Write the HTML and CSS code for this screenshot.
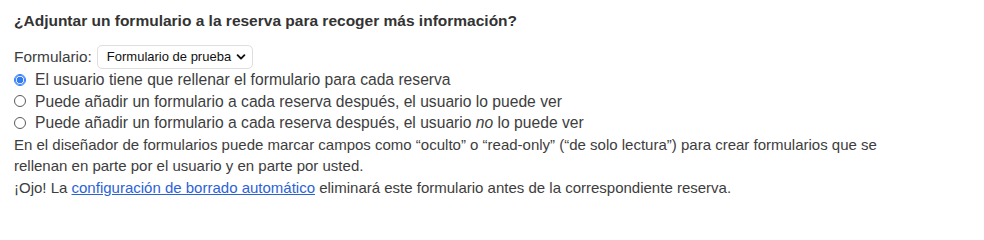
FILE: index.html
```html
<!DOCTYPE html>
<html lang="es">
<head>
<meta charset="utf-8">
<title>Formulario</title>
<link rel="stylesheet" href="styles.css">
</head>
<body>
<div class="panel">
  <h4 class="title">¿Adjuntar un formulario a la reserva para recoger más información?</h4>
  <div class="field">
    <span class="field-label">Formulario:</span>
    <span class="select">
      <span class="select-text">Formulario de prueba</span>
      <svg class="chevron" width="10" height="8" viewBox="0 0 10 8"><path d="M1.6 2.2 L5 5.6 L8.4 2.2" fill="none" stroke="#111" stroke-width="1.9" stroke-linecap="round" stroke-linejoin="round"/></svg>
    </span>
  </div>
  <div class="options">
    <label class="option"><span class="radio checked"></span><span class="option-text">El usuario tiene que rellenar el formulario para cada reserva</span></label>
    <label class="option"><span class="radio"></span><span class="option-text">Puede añadir un formulario a cada reserva después, el usuario lo puede ver</span></label>
    <label class="option"><span class="radio"></span><span class="option-text">Puede añadir un formulario a cada reserva después, el usuario <em>no</em> lo puede ver</span></label>
  </div>
  <p class="note">En el diseñador de formularios puede marcar campos como “oculto” o “read-only” (“de solo lectura”) para crear formularios que se rellenan en parte por el usuario y en parte por usted.</p>
  <p class="note">¡Ojo! La <a class="link" href="#">configuración de borrado automático</a> eliminará este formulario antes de la correspondiente reserva.</p>
</div>
</body>
</html>
```
FILE: styles.css
```css
html, body {
  margin: 0;
  padding: 0;
  background: #ffffff;
}
body {
  font-family: "Liberation Sans", Arial, sans-serif;
  font-size: 15px;
  line-height: 21.5px;
  color: #3d3d3d;
}
.panel {
  padding: 10px 70px 0 14px;
}
.title {
  margin: 0 0 13px 0;
  font-size: 15.5px;
  font-weight: bold;
  color: #333333;
  line-height: 22px;
}
.field {
  display: flex;
  align-items: center;
  gap: 5px;
  height: 24px;
}
.field-label {
  font-size: 15.4px;
  color: #3d3d3d;
}
.select {
  display: inline-flex;
  align-items: center;
  height: 24px;
  box-sizing: border-box;
  padding: 0 6px 0 9px;
  border: 1px solid #dedede;
  border-radius: 5px;
  background: #fff;
  gap: 5px;
  font-size: 13px;
  color: #111;
}
.chevron {
  display: block;
}
.options {
  display: flex;
  flex-direction: column;
}
.option {
  display: flex;
  align-items: center;
  gap: 9px;
  height: 21.5px;
}
.option-text {
  font-size: 15.65px;
}
.radio {
  width: 10px;
  height: 10px;
  border: 1px solid #5a5a5a;
  border-radius: 50%;
  box-sizing: content-box;
  flex: none;
}
.radio.checked {
  border-color: #2f7cf6;
  background: radial-gradient(circle, #2f7cf6 0 3px, #fff 3.6px);
  box-shadow: inset 0 0 0 1px #2f7cf6;
}
.note {
  margin: 0;
}
.link {
  color: #2b63d6;
  text-decoration: underline;
}
```
